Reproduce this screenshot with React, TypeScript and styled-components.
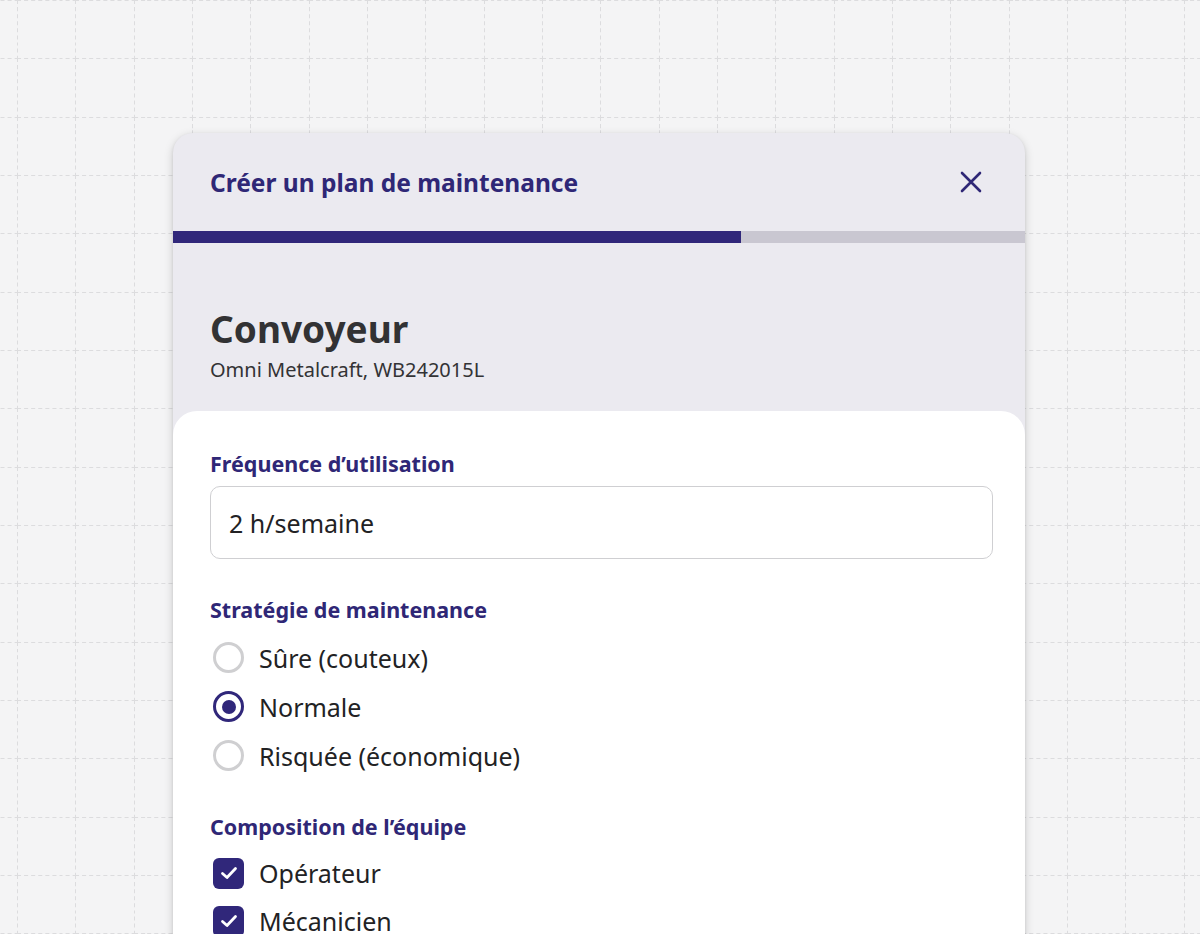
import React from "react";
import styled, { createGlobalStyle } from "styled-components";

const gridSvg = encodeURIComponent(
  `<svg xmlns="http://www.w3.org/2000/svg" width="58.333" height="58.333" viewBox="0 0 58.333 58.333"><g stroke="#dcdcde" stroke-width="1" stroke-dasharray="4 3" fill="none"><line x1="0.5" y1="0" x2="0.5" y2="58.333"/><line x1="0" y1="0.5" x2="58.333" y2="0.5"/></g></svg>`
);

const Global = createGlobalStyle`
  html, body {
    margin: 0;
    padding: 0;
    height: 934px;
    overflow: hidden;
  }
  body {
    font-family: "Noto Sans", "Open Sans", sans-serif;
    background-color: #f4f4f5;
    background-image: url("data:image/svg+xml,${gridSvg}");
    background-size: 58.333px 58.333px;
    background-position: 17px 0px;
  }
  * { box-sizing: border-box; }
`;

const Page = styled.div`
  height: 934px;
  display: flex;
  justify-content: center;
  padding-top: 133px;
  padding-right: 2px;
`;

const Card = styled.div`
  width: 852px;
  height: 900px;
  background: #ebeaf0;
  border-radius: 20px 20px 0 0;
  box-shadow: 0 3px 10px rgba(0, 0, 0, 0.18), 0 1px 3px rgba(0, 0, 0, 0.08);
  display: flex;
  flex-direction: column;
  overflow: hidden;
`;

const Header = styled.div`
  height: 98px;
  display: flex;
  align-items: center;
  justify-content: space-between;
  padding: 0 42px 0 37px;
`;

const HeaderTitle = styled.h1`
  margin: 0;
  font-size: 24.5px;
  font-weight: 700;
  color: #2f2776;
`;

const CloseButton = styled.button`
  border: none;
  background: transparent;
  padding: 0;
  width: 24px;
  height: 24px;
  display: flex;
  align-items: center;
  justify-content: center;
  cursor: pointer;
`;

const Progress = styled.div`
  height: 12px;
  background: #c9c7d1;
  flex-shrink: 0;
`;

const ProgressFill = styled.div`
  height: 100%;
  background: #30277a;
`;

const Intro = styled.div`
  padding: 63px 37px 0 37px;
  height: 168px;
  flex-shrink: 0;
`;

const AssetName = styled.h2`
  margin: 0;
  font-size: 37px;
  line-height: 46px;
  font-weight: 700;
  color: #323234;
`;

const AssetMeta = styled.div`
  margin-top: 5px;
  font-size: 20px;
  line-height: 26px;
  color: #333335;
`;

const Panel = styled.div`
  flex: 1;
  background: #ffffff;
  border-radius: 24px 24px 0 0;
  padding: 40px 32px 0 37px;
  display: flex;
  flex-direction: column;
  gap: 38px;
`;

const Section = styled.div`
  display: flex;
  flex-direction: column;
`;

const Label = styled.div`
  font-size: 21.5px;
  line-height: 26px;
  font-weight: 700;
  color: #2f2776;
  margin-bottom: 9px;
`;

const Input = styled.div`
  height: 73px;
  border: 1.5px solid #cfcfd2;
  border-radius: 10px;
  display: flex;
  align-items: center;
  padding: 0 18px;
  font-size: 25px;
  color: #222224;
`;

const OptionList = styled.div<{ $tight?: boolean }>`
  display: flex;
  flex-direction: column;
  margin-top: ${(p) => (p.$tight ? "1px" : "0")};
  margin-bottom: ${(p) => (p.$tight ? "-4px" : "0")};
`;

const OptionRow = styled.div<{ $h: number }>`
  height: ${(p) => p.$h}px;
  display: flex;
  align-items: center;
  gap: 15px;
  padding-left: 3px;
  font-size: 25px;
  color: #222224;
`;

const Radio = styled.span<{ $checked?: boolean }>`
  width: 31px;
  height: 31px;
  border-radius: 50%;
  border: 3px solid ${(p) => (p.$checked ? "#30277a" : "#cfcfd1")};
  display: flex;
  align-items: center;
  justify-content: center;
  flex-shrink: 0;
  &::after {
    content: "";
    display: ${(p) => (p.$checked ? "block" : "none")};
    width: 14px;
    height: 14px;
    border-radius: 50%;
    background: #30277a;
  }
`;

const Checkbox = styled.span`
  width: 31px;
  height: 31px;
  border-radius: 6px;
  background: #30277a;
  display: flex;
  align-items: center;
  justify-content: center;
  flex-shrink: 0;
`;

const CheckIcon = () => (
  <svg width="20" height="20" viewBox="0 0 20 20" fill="none">
    <path d="M3.5 10.5 L8 14.5 L16.5 5.5" stroke="#fff" strokeWidth="2.8" strokeLinecap="round" strokeLinejoin="round" />
  </svg>
);

const CloseIcon = () => (
  <svg width="22" height="22" viewBox="0 0 22 22" fill="none">
    <path d="M2 2 L20 20 M20 2 L2 20" stroke="#2f2776" strokeWidth="2.6" strokeLinecap="round" />
  </svg>
);

const strategies = [
  { label: "Sûre (couteux)", checked: false },
  { label: "Normale", checked: true },
  { label: "Risquée (économique)", checked: false },
];

const team = ["Opérateur", "Mécanicien", "Électricien"];

export default function App() {
  const progress = 2 / 3;
  return (
    <>
      <Global />
      <Page>
        <Card>
          <Header>
            <HeaderTitle>Créer un plan de maintenance</HeaderTitle>
            <CloseButton aria-label="Fermer">
              <CloseIcon />
            </CloseButton>
          </Header>
          <Progress>
            <ProgressFill style={{ width: `${progress * 100}%` }} />
          </Progress>
          <Intro>
            <AssetName>Convoyeur</AssetName>
            <AssetMeta>Omni Metalcraft, WB242015L</AssetMeta>
          </Intro>
          <Panel>
            <Section>
              <Label>Fréquence d’utilisation</Label>
              <Input>2 h/semaine</Input>
            </Section>
            <Section>
              <Label>Stratégie de maintenance</Label>
              <OptionList $tight>
                {strategies.map((s) => (
                  <OptionRow key={s.label} $h={49}>
                    <Radio $checked={s.checked} />
                    {s.label}
                  </OptionRow>
                ))}
              </OptionList>
            </Section>
            <Section>
              <Label>Composition de l’équipe</Label>
              <OptionList>
                {team.map((t) => (
                  <OptionRow key={t} $h={48}>
                    <Checkbox>
                      <CheckIcon />
                    </Checkbox>
                    {t}
                  </OptionRow>
                ))}
              </OptionList>
            </Section>
          </Panel>
        </Card>
      </Page>
    </>
  );
}
